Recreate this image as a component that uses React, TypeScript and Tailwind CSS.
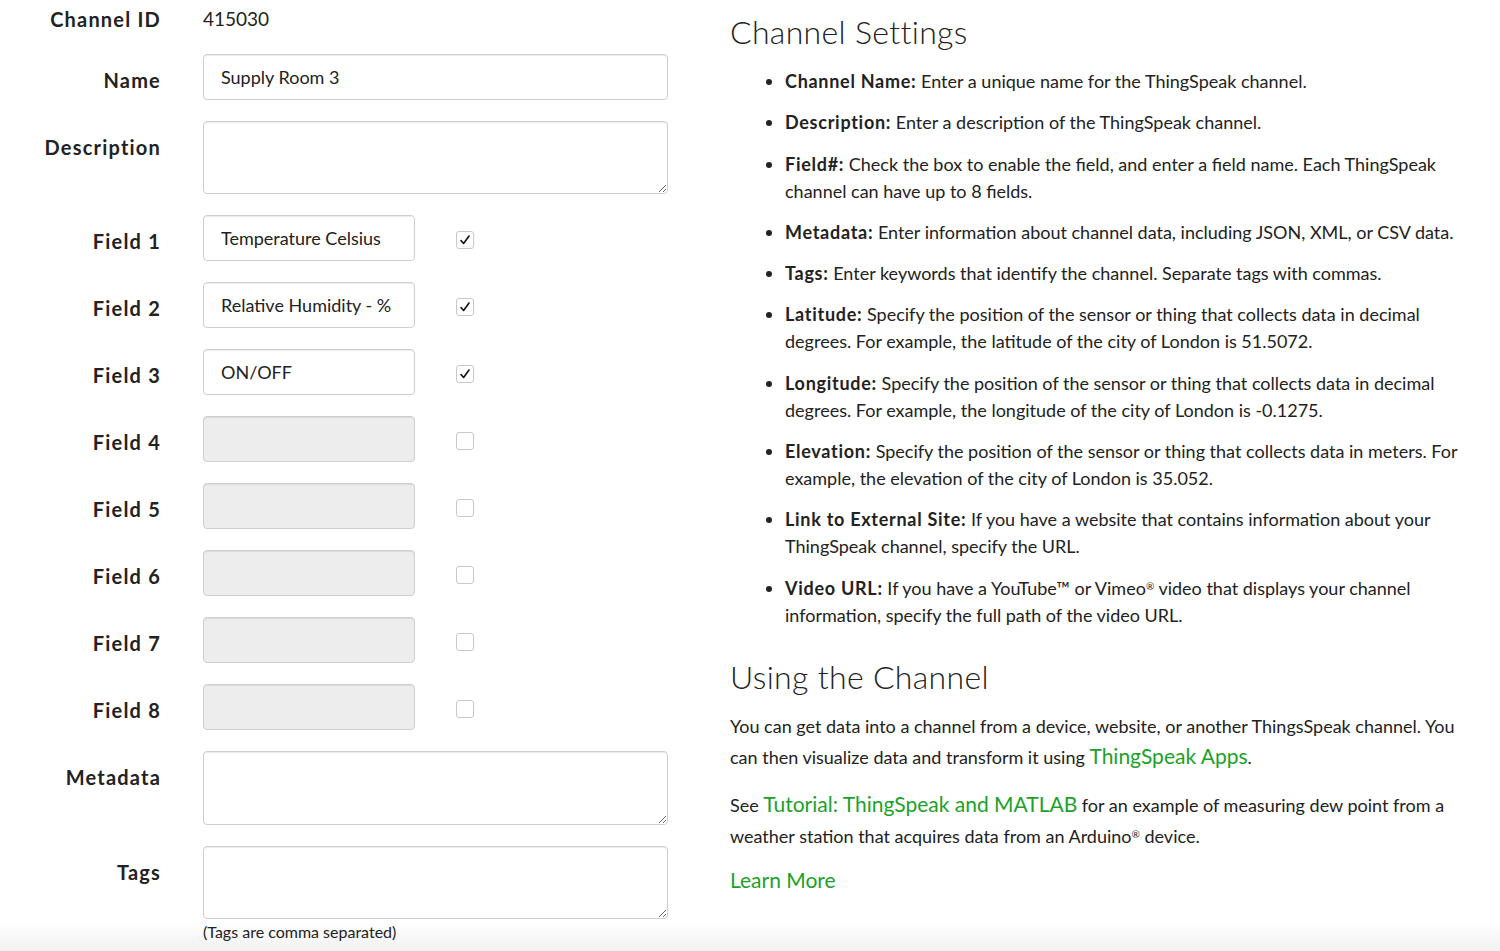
import React from 'react'

const FONT = "font-['Lato','Liberation_Sans',sans-serif]"
const GREEN = 'text-[#1ca12a] text-[21px] leading-none'

const FIELDS = [
  { label: 'Field 1', value: 'Temperature Celsius', on: true },
  { label: 'Field 2', value: 'Relative Humidity - %', on: true },
  { label: 'Field 3', value: 'ON/OFF', on: true },
  { label: 'Field 4', value: '', on: false },
  { label: 'Field 5', value: '', on: false },
  { label: 'Field 6', value: '', on: false },
  { label: 'Field 7', value: '', on: false },
  { label: 'Field 8', value: '', on: false },
]

function Label({ children }: { children: React.ReactNode }) {
  return (
    <div className="w-[161px] shrink-0 h-[46px] pt-[5px] flex items-center justify-end text-[20px] font-bold tracking-[0.06em] text-[#222]">
      {children}
    </div>
  )
}

function Check({ on }: { on: boolean }) {
  return (
    <span className="ml-[41px] mt-[4px] w-[18px] h-[18px] rounded-[3px] border border-[#c8c8c8] bg-white flex items-center justify-center">
      {on && (
        <svg width="12" height="12" viewBox="0 0 12 12">
          <path d="M2 6.5 L4.6 9.5 L10 2" fill="none" stroke="#111" strokeWidth="1.6" strokeLinecap="round" strokeLinejoin="round" />
        </svg>
      )}
    </span>
  )
}

const inputCls =
  'h-[46px] rounded-[4px] border border-[#cfcfcf] shadow-[inset_0_1px_1px_rgba(0,0,0,0.08)] px-[17px] text-[18px] text-[#222] outline-none'

function Item({ term, children }: { term: string; children: React.ReactNode }) {
  return (
    <li className="mb-[14.3px] whitespace-nowrap">
      <span className="font-bold tracking-[0.04em]">{term}</span> {children}
    </li>
  )
}

export default function App() {
  return (
    <div className={`${FONT} w-[1500px] h-[951px] overflow-hidden bg-linear-to-b from-white from-[97%] to-[#f1f1f1] text-[#222] flex`}>
      {/* form */}
      <div className="w-[668px] shrink-0 flex flex-col gap-[21px] pt-[3px]">
        <div className="flex items-center h-[30px] pt-[1px]">
          <div className="w-[161px] text-right text-[20px] font-bold tracking-[0.06em]">Channel ID</div>
          <div className="ml-[42px] text-[19px] pt-[1px]">415030</div>
        </div>

        <div className="flex items-start">
          <Label>Name</Label>
          <input readOnly value="Supply Room 3" className={`${inputCls} ml-[42px] w-[465px]`} />
        </div>

        <div className="flex items-start">
          <Label>Description</Label>
          <textarea readOnly className={`${inputCls} ml-[42px] w-[465px] h-[73px] block`} />
        </div>

        {FIELDS.map((f) => (
          <div key={f.label} className="flex items-start">
            <Label>{f.label}</Label>
            <input
              readOnly
              value={f.value}
              className={`${inputCls} ml-[42px] w-[212px] ${f.on ? 'bg-white' : 'bg-[#ededed]'}`}
            />
            <div className="h-[46px] flex items-center">
              <Check on={f.on} />
            </div>
          </div>
        ))}

        <div className="flex items-start">
          <Label>Metadata</Label>
          <textarea readOnly className={`${inputCls} ml-[42px] w-[465px] h-[74px] block`} />
        </div>

        <div className="flex items-start">
          <Label>Tags</Label>
          <div className="ml-[42px]">
            <textarea readOnly className={`${inputCls} w-[465px] h-[73px] block`} />
            <p className="text-[16px] mt-[2px] leading-[22px]">(Tags are comma separated)</p>
          </div>
        </div>
      </div>

      {/* help */}
      <div className="ml-[62px] w-[760px] pt-[14px] text-[18px]">
        <h2 className="text-[32px] font-light leading-[36px] tracking-[0.01em]">Channel Settings</h2>
        <ul className="list-disc pl-[55px] mt-[18px] mb-[29px] leading-[27px]">
          <Item term="Channel Name:">Enter a unique name for the ThingSpeak channel.</Item>
          <Item term="Description:">Enter a description of the ThingSpeak channel.</Item>
          <Item term="Field#:">
            Check the box to enable the field, and enter a field name. Each ThingSpeak
            <br />
            channel can have up to 8 fields.
          </Item>
          <Item term="Metadata:">Enter information about channel data, including JSON, XML, or CSV data.</Item>
          <Item term="Tags:">Enter keywords that identify the channel. Separate tags with commas.</Item>
          <Item term="Latitude:">
            Specify the position of the sensor or thing that collects data in decimal
            <br />
            degrees. For example, the latitude of the city of London is 51.5072.
          </Item>
          <Item term="Longitude:">
            Specify the position of the sensor or thing that collects data in decimal
            <br />
            degrees. For example, the longitude of the city of London is -0.1275.
          </Item>
          <Item term="Elevation:">
            Specify the position of the sensor or thing that collects data in meters. For
            <br />
            example, the elevation of the city of London is 35.052.
          </Item>
          <Item term="Link to External Site:">
            If you have a website that contains information about your
            <br />
            ThingSpeak channel, specify the URL.
          </Item>
          <Item term="Video URL:">
            If you have a YouTube™ or Vimeo<sup className="text-[10px]">®</sup> video that displays your channel
            <br />
            information, specify the full path of the video URL.
          </Item>
        </ul>

        <h2 className="text-[32px] font-light leading-[38px] tracking-[0.01em]">Using the Channel</h2>
        <p className="mt-[15px] leading-[31px] whitespace-nowrap">
          You can get data into a channel from a device, website, or another ThingsSpeak channel. You
          <br />
          can then visualize data and transform it using <a className={GREEN}>ThingSpeak Apps</a>.
        </p>
        <p className="mt-[17px] leading-[31px] whitespace-nowrap">
          See <a className={GREEN}>Tutorial: ThingSpeak and MATLAB</a> for an example of measuring dew point from a
          <br />
          weather station that acquires data from an Arduino<sup className="text-[10px]">®</sup> device.
        </p>
        <p className="mt-[14px] leading-[31px]">
          <a className={GREEN}>Learn More</a>
        </p>
      </div>
    </div>
  )
}
